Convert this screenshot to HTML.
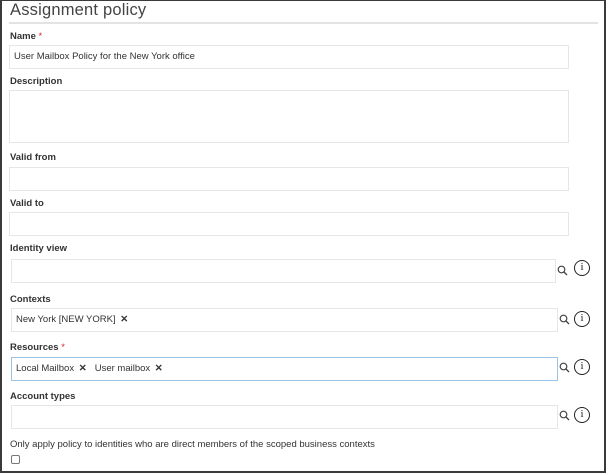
<!DOCTYPE html>
<html><head><style>
*{margin:0;padding:0;box-sizing:border-box}
body{width:608px;height:475px;background:#fff;font-family:"Liberation Sans",sans-serif;position:relative;overflow:hidden}
.frame{position:absolute;left:0;top:0;width:606px;height:473px;border:2px solid #3a3a3a;border-top-width:1px}
.t{position:absolute;left:10px;top:1px;font-size:16.5px;color:#444;font-weight:300;letter-spacing:0.2px}
.hr{position:absolute;left:9px;top:22px;width:589px;height:2px;background:#e3e3e3}
.l{position:absolute;left:10px;font-size:9.5px;font-weight:bold;color:#333}
.l b{color:#d9262b;font-weight:normal}
.i{position:absolute;left:9px;width:560px;height:24px;border:1px solid #e6e6e6;font-size:9.5px;color:#333;padding:0 0 0 4px;line-height:22px}
.blue{border-color:#9cc3e6}
.s{position:absolute;width:11px;height:11px}
.n{position:absolute;width:16px;height:16px;border:1.3px solid #222;border-radius:50%;font-family:"Liberation Serif",serif;font-size:11px;line-height:13px;text-align:center;color:#222}
.x{font-weight:bold;margin:0 8px 0 2px}
</style></head><body>
<div class="frame"></div>
<div class="t">Assignment policy</div>
<div class="hr"></div>
<div class="l" style="top:31px">Name <b>*</b></div>
<div class="i" style="top:45px">User Mailbox Policy for the New York office</div>
<div class="l" style="top:76px">Description</div>
<div class="i" style="top:90px;height:53px"></div>
<div class="l" style="top:152px">Valid from</div>
<div class="i" style="top:167px"></div>
<div class="l" style="top:198px">Valid to</div>
<div class="i" style="top:212px"></div>
<div class="l" style="top:243px">Identity view</div>
<div class="i" style="top:259px;left:11px;width:545px"></div>
<div class="l" style="top:294px">Contexts</div>
<div class="i" style="top:308px;left:11px;width:547px">New York [NEW YORK] <span class="x">✕</span></div>
<div class="l" style="top:342px">Resources <b>*</b></div>
<div class="i blue" style="top:357px;left:11px;width:547px">Local Mailbox <span class="x">✕</span>User mailbox <span class="x">✕</span></div>
<div class="l" style="top:391px">Account types</div>
<div class="i" style="top:405px;left:11px;width:547px"></div>
<div class="l" style="top:439px;font-weight:normal;color:#333">Only apply policy to identities who are direct members of the scoped business contexts</div>
<div style="position:absolute;left:11px;top:455px;width:9px;height:9px;border:1px solid #777;border-radius:2px"></div>
<svg class="s" style="left:557px;top:265px" viewBox="0 0 11 11"><circle cx="4.5" cy="4.5" r="3.3" fill="none" stroke="#444" stroke-width="1.2"/><line x1="7" y1="7" x2="10" y2="10" stroke="#444" stroke-width="1.3"/></svg>
<div class="n" style="left:574px;top:260px">i</div>
<svg class="s" style="left:559px;top:314px" viewBox="0 0 11 11"><circle cx="4.5" cy="4.5" r="3.3" fill="none" stroke="#444" stroke-width="1.2"/><line x1="7" y1="7" x2="10" y2="10" stroke="#444" stroke-width="1.3"/></svg>
<div class="n" style="left:574px;top:311px">i</div>
<svg class="s" style="left:559px;top:362px" viewBox="0 0 11 11"><circle cx="4.5" cy="4.5" r="3.3" fill="none" stroke="#444" stroke-width="1.2"/><line x1="7" y1="7" x2="10" y2="10" stroke="#444" stroke-width="1.3"/></svg>
<div class="n" style="left:574px;top:359px">i</div>
<svg class="s" style="left:559px;top:410px" viewBox="0 0 11 11"><circle cx="4.5" cy="4.5" r="3.3" fill="none" stroke="#444" stroke-width="1.2"/><line x1="7" y1="7" x2="10" y2="10" stroke="#444" stroke-width="1.3"/></svg>
<div class="n" style="left:574px;top:407px">i</div>
</body></html>
